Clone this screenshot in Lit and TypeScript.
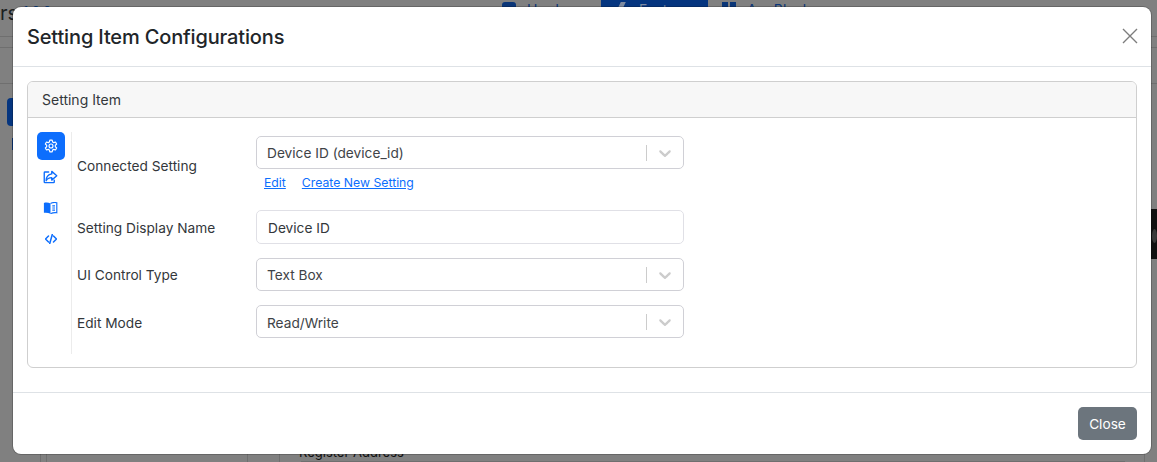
import { LitElement, html, css } from "lit";
import { customElement } from "lit/decorators.js";

const chevron = html`<svg class="chev" width="20" height="20" viewBox="0 0 20 20"><path fill="#cccccc" d="M4.516 7.548c.436-.446 1.043-.481 1.576 0L10 11.295l3.908-3.747c.533-.481 1.141-.446 1.574 0 .436.445.408 1.197 0 1.615-.406.418-4.695 4.502-4.695 4.502a1.095 1.095 0 0 1-1.576 0S4.924 9.581 4.516 9.163c-.409-.418-.436-1.170 0-1.615z"/></svg>`;

@customElement("app-root")
export class AppRoot extends LitElement {
  static styles = css`
    :host { display: block; width: 1157px; height: 462px; overflow: hidden; position: relative; background: #808080; font-family: Inter, "Liberation Sans", sans-serif; color: #212529; font-size: 13.7px; }
    * { box-sizing: border-box; }
    .backdrop { position: absolute; inset: 0; }
    .bg { position: absolute; white-space: nowrap; }
    .rs { left: 0; top: 1px; font-size: 20px; color: #1c1f22; }
    .ver { left: 23px; top: 3px; font-size: 13px; color: #0d3f80; }
    .tab { top: 2px; font-size: 14px; line-height: 16px; color: #0a3577; display: flex; gap: 11px; }
    .hw { left: 502px; }
    .ft { left: 601px; top: 0; width: 107px; height: 16px; padding: 2px 0 0 17px; background: #05357f; color: #7d8aa0; gap: 16px; }
    .ap { left: 722px; }
    .sq { width: 14px; height: 14px; background: #0a3577; flex: none; border-radius: 3px; }
    .two { width: 14px; height: 14px; flex: none; display: flex; gap: 2px; }
    .two b { flex: 1; background: #0a3577; }
    .sl { width: 5px; height: 12px; background: #7d8aa0; flex: none; transform: skewX(-25deg); }
    .hline { position: absolute; height: 1px; background: #6f6f6f; left: 0; right: 0; }
    .h1 { top: 36px; } .h2 { top: 47px; } .h3 { top: 83px; }
    .h4 { top: 461px; left: 301px; right: 32px; }
    .vline { position: absolute; width: 1px; background: #6f6f6f; top: 454px; bottom: 0; }
    .v1 { left: 40px; } .v2 { left: 46px; } .v3 { left: 247px; } .v4 { left: 279px; } .v5 { left: 1144px; }
    .pill { position: absolute; left: 7px; top: 98px; width: 20px; height: 28px; background: #05357f; border-radius: 4px; }
    .dot { position: absolute; left: 12px; top: 138px; width: 2px; height: 12px; background: #0a3577; }
    .patch { position: absolute; left: 1150px; right: 0; top: 209px; height: 50px; background: #111; }
    .blob { position: absolute; left: 1152px; top: 229px; width: 5px; height: 14px; border-radius: 50%; background: #3a3a3a; }
    .reg { left: 299px; top: 444px; font-size: 13px; color: #111; }
    .modal { position: absolute; left: 13px; top: 7px; width: 1138px; height: 447px; background: #fff; border-radius: 8px; display: flex; flex-direction: column; box-shadow: 0 0 0 1px rgba(0,0,0,.2); }
    .head { height: 60px; flex: none; border-bottom: 1px solid #dee2e6; display: flex; align-items: center; justify-content: space-between; padding: 0 13px 0 14px; }
    h5 { margin: 0; font-size: 20px; font-weight: 500; line-height: 24px; letter-spacing: -0.15px; color: #212529; }
    .x { display: block; margin-bottom: 2px; }
    .body { flex: 1; padding: 14px 14px 24px 14px; display: flex; }
    .card { flex: 1; border: 1px solid #cfcfcf; border-radius: 6px; display: flex; flex-direction: column; overflow: hidden; }
    .card-h { height: 36px; flex: none; background: #f7f7f7; border-bottom: 1px solid #cfcfcf; padding: 0 14px; display: flex; align-items: center; font-size: 14px; color: #33373b; }
    .card-b { flex: 1; display: flex; padding: 14px 0 13px 9px; }
    .rail { width: 35px; flex: none; border-right: 1px solid #ececec; display: flex; flex-direction: column; }
    .ib { width: 28px; height: 28px; display: flex; align-items: center; justify-content: center; border-radius: 5px; color: #0d6efd; margin-bottom: 3px; }
    .ib.on { background: #0d6efd; color: #fff; }
    .ib:not(.on) svg { margin-right: 1px; }
    .form { padding: 4px 0 0 5px; display: flex; flex-direction: column; }
    .row { display: grid; grid-template-columns: 179px 428px; align-items: center; }
    .r1 { align-items: start; margin-bottom: 19px; }
    .r1 .lbl { padding-top: 22px; }
    .r2 { margin-bottom: 13px; height: 35px; }
    .r3 { margin-bottom: 12px; height: 35px; }
    .r3 .lbl { padding-bottom: 2px; }
    .r4 { height: 35px; }
    .r4 .v { padding-top: 2px; }
    .lbl { color: #33373b; line-height: 16px; }
    .sel { height: 33px; align-self: start; border: 1px solid #d0d0d6; border-radius: 5px; display: flex; align-items: center; padding-left: 10px; color: #404347; background: #fff; }
    .sel .v { flex: 1; }
    .sep { width: 1px; height: 16px; background: #cccccc; }
    .chev { margin: 0 8px; display: block; }
    .inp { height: 34px; align-self: start; border: 1px solid #e0e0e6; border-radius: 5px; display: flex; align-items: center; padding: 1px 0 0 11px; color: #33373b; }
    .links { display: flex; gap: 16px; margin: 6px 0 0 8px; font-size: 12.25px; line-height: 16px; }
    a { color: #0d6efd; text-decoration: underline; }
    .foot { height: 62px; flex: none; border-top: 1px solid #dee2e6; display: flex; align-items: center; justify-content: flex-end; padding: 0 14px; }
    button { width: 59px; height: 33px; border: 0; border-radius: 5px; background: #6c757d; color: #fff; font: 13.7px Inter, "Liberation Sans", sans-serif; padding: 0; }
  `;

  render() {
    return html`
      <div class="backdrop">
        <span class="bg rs">rs</span><span class="bg ver">1.0.0</span>
        <div class="bg tab hw"><i class="sq"></i>Hardware</div>
        <div class="bg tab ft"><i class="sl"></i>Features</div>
        <div class="bg tab ap"><i class="two"><b></b><b></b></i>AppBlocks</div>
        <div class="hline h1"></div>
        <div class="hline h2"></div>
        <div class="hline h3"></div>
        <div class="hline h4"></div>
        <div class="pill"></div><div class="dot"></div>
        <div class="patch"></div><div class="blob"></div>
        <div class="vline v1"></div>
        <div class="vline v2"></div>
        <div class="vline v3"></div>
        <div class="vline v4"></div>
        <div class="vline v5"></div>
        <span class="bg reg">Register Address</span>
      </div>
      <div class="modal">
        <div class="head">
          <h5>Setting Item Configurations</h5>
          <svg class="x" width="16" height="16" viewBox="0 0 16 16"><path d="M1 1l14 14M15 1L1 15" stroke="#7d7d7d" stroke-width="1.4" fill="none"/></svg>
        </div>
        <div class="body">
          <div class="card">
            <div class="card-h">Setting Item</div>
            <div class="card-b">
              <div class="rail">
                <div class="ib on"><svg width="14" height="14" viewBox="0 0 24 24" fill="none" stroke="currentColor" stroke-width="2" stroke-linejoin="round"><circle cx="12" cy="12" r="3.4"/><path d="M10 2h4l.7 3.100 2 1.100 3-1 2 3.500-2.300 2.100v2.400l2.300 2.100-2 3.500-3-1-2 1.100L14 22h-4l-.7-3.100-2-1.100-3 1-2-3.500 2.300-2.100v-2.400L2.300 8.700l2-3.500 3 1 2-1.100z"/></svg></div>
                <div class="ib"><svg width="15" height="14" viewBox="0 0 24 22" fill="none" stroke="currentColor" stroke-width="2.2" stroke-linejoin="round" stroke-linecap="round"><path d="M14 2l8 7-8 7v-4c-4 0-7 1-9 5 0-6 3-10 9-11z"/><path d="M9 3H3a1 1 0 0 0-1 1v15a1 1 0 0 0 1 1h14a1 1 0 0 0 1-1v-3"/></svg></div>
                <div class="ib"><svg width="15" height="12" viewBox="0 0 24 20"><path fill="currentColor" d="M1 1.500c4-1 8-.5 11 1V19.500C9 18 5 17.500 1 18z"/><path fill="none" stroke="currentColor" stroke-width="1.900" d="M12 2.500c3-1.500 7-2 10.500-1.200V18c-3.500-.5-7.500 0-10.500 1.500M15 6.500h4.500M15 10h4.500M15 13.500h4.500"/></svg></div>
                <div class="ib"><svg width="12" height="10" viewBox="0 0 24 20" fill="none" stroke="currentColor" stroke-width="3" stroke-linecap="round" stroke-linejoin="round"><path d="M7 4l-6 6 6 6M17 4l6 6-6 6M14.500 1l-5 18"/></svg></div>
              </div>
              <div class="form">
                <div class="row r1">
                  <div class="lbl">Connected Setting</div>
                  <div>
                    <div class="sel"><span class="v">Device ID (device_id)</span><span class="sep"></span>${chevron}</div>
                    <div class="links"><a>Edit</a><a>Create New Setting</a></div>
                  </div>
                </div>
                <div class="row r2"><div class="lbl">Setting Display Name</div><div class="inp">Device ID</div></div>
                <div class="row r3"><div class="lbl">UI Control Type</div><div class="sel"><span class="v">Text Box</span><span class="sep"></span>${chevron}</div></div>
                <div class="row r4"><div class="lbl">Edit Mode</div><div class="sel"><span class="v">Read/Write</span><span class="sep"></span>${chevron}</div></div>
              </div>
            </div>
          </div>
        </div>
        <div class="foot"><button>Close</button></div>
      </div>
    `;
  }
}
